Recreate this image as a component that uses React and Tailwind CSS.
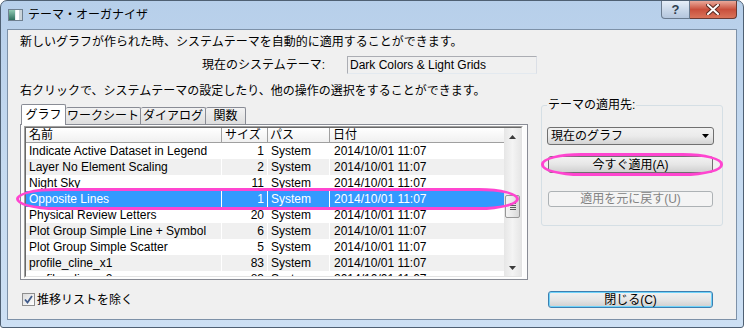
const rows = [
  ["Indicate Active Dataset in Legend", "1"],
  ["Layer No Element Scaling", "2"],
  ["Night Sky", "11"],
  ["Opposite Lines", "1"],
  ["Physical Review Letters", "20"],
  ["Plot Group Simple Line + Symbol", "6"],
  ["Plot Group Simple Scatter", "5"],
  ["profile_cline_x1", "83"],
  ["profile_cline_x2", "83"],
];

function TitleIcon() {
  return (
    <svg width="15" height="12" viewBox="0 0 15 12">
      <defs>
        <linearGradient id="ig" x1="0" y1="0" x2="0" y2="1">
          <stop offset="0" stopColor="#8fc9b2" />
          <stop offset="1" stopColor="#2f6f5e" />
        </linearGradient>
      </defs>
      <rect x="0.5" y="0.5" width="14" height="11" fill="#e9eef2" stroke="#6f8090" />
      <rect x="1" y="1" width="6" height="10" fill="url(#ig)" />
      <rect x="8" y="1" width="3" height="10" fill="#ffffff" />
      <rect x="11" y="1" width="3" height="10" fill="#c9d3da" />
    </svg>
  );
}

function CloseGlyph() {
  return (
    <svg width="14" height="11" viewBox="0 0 14 11">
      <path d="M2 1 L12 10 M12 1 L2 10" stroke="#5b2a22" strokeWidth="4" strokeLinecap="square" />
      <path d="M2 1 L12 10 M12 1 L2 10" stroke="#ffffff" strokeWidth="2" strokeLinecap="square" />
    </svg>
  );
}

export default function App() {
  return (
    <div className="relative h-[328px] w-[744px] bg-white font-['Liberation_Sans','Noto_Sans_CJK_JP',sans-serif] text-[12px] text-black">
      <div className="flex h-full w-full flex-col rounded-t-[7px] rounded-b-[3px] border border-[#4f6073] bg-gradient-to-b from-[#b7cfea] via-[#c5daf0] to-[#cde0f4]">
        {/* title bar */}
        <div className="flex h-[28px] shrink-0">
          <div className="ml-[7px] mt-[8px] h-[12px]">
            <TitleIcon />
          </div>
          <div className="ml-[5px] mt-[6px] leading-[16px] text-[12px]">テーマ・オーガナイザ</div>
          <div className="ml-auto mr-[6px] flex h-[18px] self-start">
            <div className="flex w-[29px] items-center justify-center rounded-bl-[4px] border border-t-0 border-[#6a7b8f] bg-gradient-to-b from-[#e6eef8] via-[#cbd9ea] to-[#b4c6dd] text-[13px] font-bold leading-none text-[#2f3d50]">
              ?
            </div>
            <div className="flex w-[47px] items-center justify-center rounded-br-[4px] border border-l-0 border-t-0 border-[#6a3a33] bg-gradient-to-b from-[#e9a89a] via-[#c94f3c] to-[#d9735a]">
              <CloseGlyph />
            </div>
          </div>
        </div>

        {/* client */}
        <div className="mx-[6px] mb-[7px] flex flex-1 flex-col border border-[#7d91a8] bg-[#f0f0f0]">
          <div className="ml-[12px] mt-[4px] h-[16px] leading-[16px]">
            新しいグラフが作られた時、システムテーマを自動的に適用することができます。
          </div>
          <div className="mt-[6px] flex h-[18px] items-center">
            <div className="w-[317px] text-right leading-[16px]">現在のシステムテーマ:</div>
            <div className="ml-[22px] flex h-[18px] w-[190px] items-center border border-[#abadb3] border-b-[#e3e9ef] border-r-[#dbdfe6] bg-[#f0f0f0] pl-[2px] leading-[14px]">
              Dark Colors &amp; Light Grids
            </div>
          </div>
          <div className="ml-[12px] mt-[9px] h-[16px] leading-[16px]">
            右クリックで、システムテーマの設定したり、他の操作の選択をすることができます。
          </div>

          {/* main row */}
          <div className="flex">
            {/* left: tabs */}
            <div className="ml-[12px] flex w-[508px] flex-col">
              <div className="mt-[5px] flex h-[20px] items-end pl-[1px]">
                <div className="relative z-10 -mb-px flex h-[21px] w-[45px] items-center justify-center rounded-t-[2px] border border-b-0 border-[#898c95] bg-white leading-[14px]">
                  グラフ
                </div>
                <div className="flex h-[17px] w-[75px] items-center justify-center rounded-t-[2px] border border-b-0 border-l-0 border-[#898c95] bg-gradient-to-b from-[#f3f3f3] to-[#dedede] leading-[14px]">
                  ワークシート
                </div>
                <div className="flex h-[17px] w-[65px] items-center justify-center rounded-t-[2px] border border-b-0 border-l-0 border-[#898c95] bg-gradient-to-b from-[#f3f3f3] to-[#dedede] leading-[14px]">
                  ダイアログ
                </div>
                <div className="flex h-[17px] w-[40px] items-center justify-center rounded-t-[2px] border border-b-0 border-l-0 border-[#898c95] bg-gradient-to-b from-[#f3f3f3] to-[#dedede] leading-[14px]">
                  関数
                </div>
              </div>
              <div className="h-[156px] border border-[#898c95] bg-[#fcfcfc] pl-[3px] pt-[1px]">
                <div className="h-[152px] w-[499px] border border-[#a0a0a0] border-b-[#ffffff] border-r-[#ffffff]">
                  <div className="flex h-full w-full overflow-hidden border border-[#696969] border-b-[#e3e3e3] border-r-[#e3e3e3] bg-white">
                    {/* columns */}
                    <div className="flex w-[478px] flex-col">
                      <div className="flex h-[15px] shrink-0 border-b border-[#a0a0a0] bg-gradient-to-b from-[#ffffff] to-[#f0f0f0] leading-[14px]">
                        <div className="w-[196px] border-r border-[#a0a0a0] pl-[3px]">名前</div>
                        <div className="w-[46px] border-r border-[#a0a0a0] pl-[3px]">サイズ</div>
                        <div className="w-[62px] border-r border-[#a0a0a0] pl-[2px]">パス</div>
                        <div className="flex-1 pl-[3px]">日付</div>
                      </div>
                      {rows.map(([name, size], i) => {
                        const sel = i === 3;
                        const bg = sel ? "bg-[#3399ff] text-white" : i % 2 === 1 ? "bg-[#f0f0f0]" : "bg-white";
                        return (
                          <div key={name} className={`flex h-[16px] shrink-0 leading-[16px] ${bg}`}>
                            <div className="w-[196px] whitespace-nowrap border-r border-white pl-[3px]">{name}</div>
                            <div className="w-[46px] border-r border-white pr-[3px] text-right">{size}</div>
                            <div className="w-[62px] border-r border-white pl-[3px]">System</div>
                            <div className="flex-1 pl-[4px]">2014/10/01 11:07</div>
                          </div>
                        );
                      })}
                    </div>
                    {/* scrollbar */}
                    <div className="flex w-[17px] flex-col bg-gradient-to-r from-[#e6e6e6] via-[#f4f4f4] to-[#e6e6e6]">
                      <div className="flex h-[17px] shrink-0 items-center justify-center">
                        <svg width="7" height="4" viewBox="0 0 7 4"><path d="M0 4 L3.5 0 L7 4 Z" fill="#3c3c3c" /></svg>
                      </div>
                      <div className="flex-1">
                        <div className="mx-px mt-[50px] flex h-[23px] flex-col items-center justify-center gap-[1px] rounded-[2px] border border-[#979797] bg-gradient-to-r from-[#f4f4f4] via-[#e9e9e9] to-[#d8d8d8]">
                          <div className="h-px w-[6px] bg-[#5d5d5d]" />
                          <div className="h-px w-[6px] bg-[#5d5d5d]" />
                          <div className="h-px w-[6px] bg-[#5d5d5d]" />
                          <div className="h-px w-[6px] bg-[#5d5d5d]" />
                        </div>
                      </div>
                      <div className="flex h-[17px] shrink-0 items-center justify-center">
                        <svg width="7" height="4" viewBox="0 0 7 4"><path d="M0 0 L7 0 L3.5 4 Z" fill="#3c3c3c" /></svg>
                      </div>
                    </div>
                  </div>
                </div>
              </div>
            </div>

            {/* right: group box */}
            <fieldset className="ml-[13px] w-[182px] self-start rounded-[3px] border border-[#d5dfe5] px-[5px] pb-[18px]">
              <legend className="px-[1px] leading-[12px]">テーマの適用先:</legend>
              <div className="mt-[16px] flex h-[18px] w-[167px] items-center justify-between rounded-[3px] border border-[#707070] bg-gradient-to-b from-[#f2f2f2] via-[#ebebeb] to-[#d4d4d4] pl-[3px] pr-[4px] leading-[14px]">
                <span>現在のグラフ</span>
                <svg width="7" height="4" viewBox="0 0 7 4"><path d="M0 0 L7 0 L3.5 4 Z" fill="#000" /></svg>
              </div>
              <div className="ml-[1px] mt-[11px] flex h-[17px] w-[165px] items-center justify-center rounded-[3px] border border-[#707070] bg-gradient-to-b from-[#f2f2f2] via-[#e6e6e6] to-[#d0d0d0] leading-[14px]">
                今すぐ適用(A)
              </div>
              <div className="ml-[1px] mt-[18px] flex h-[16px] w-[165px] items-center justify-center rounded-[3px] border border-[#adb2b5] bg-[#f4f4f4] leading-[14px] text-[#838383]">
                適用を元に戻す(U)
              </div>
            </fieldset>
          </div>

          {/* bottom row */}
          <div className="mt-[11px] flex h-[17px] items-center">
            <div className="ml-[14px] flex h-[13px] w-[13px] items-center justify-center border border-[#8f8f8f] bg-gradient-to-br from-[#dcdcdc] to-[#ffffff]">
              <svg width="9" height="9" viewBox="0 0 9 9">
                <path d="M1 4.5 L3.5 7.5 L8 1" fill="none" stroke="#3f5a8a" strokeWidth="1.8" />
              </svg>
            </div>
            <div className="ml-[2px] leading-[14px]">推移リストを除く</div>
            <div className="ml-auto mr-[23px] flex h-[17px] w-[165px] items-center justify-center rounded-[3px] border border-[#3c7fb1] bg-gradient-to-b from-[#f2f2f2] via-[#e6e6e6] to-[#cfcfcf] leading-[14px] shadow-[inset_0_0_0_1px_#6fd3fa]">
              閉じる(C)
            </div>
          </div>
        </div>
      </div>

      {/* annotation ellipses */}
      <div className="absolute left-[16px] top-[188px] h-[22px] w-[503px] rounded-[40px/11px] border-[3px] border-[#ff45d0]" />
      <div className="absolute left-[541px] top-[153px] h-[23px] w-[182px] rounded-[40px/11px] border-[3px] border-[#ff45d0]" />
    </div>
  );
}
